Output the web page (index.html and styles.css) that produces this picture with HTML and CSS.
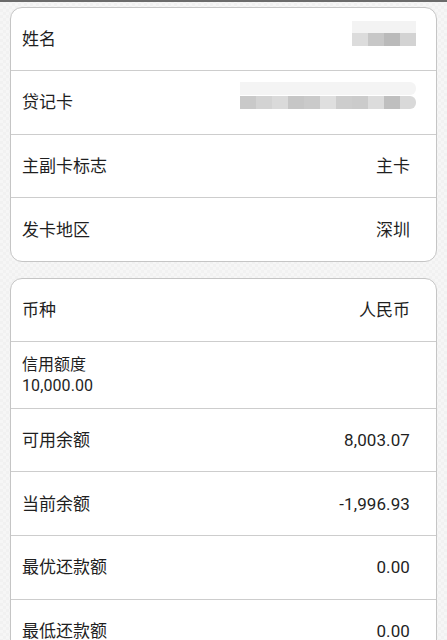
FILE: index.html
```html
<!DOCTYPE html>
<html lang="zh-CN">
<head>
<meta charset="utf-8">
<title>信用卡信息</title>
<link rel="stylesheet" href="styles.css">
</head>
<body>
<div class="topbar"></div>
<main class="page">
  <section class="card card-info">
    <div class="row">
      <span class="label">姓名</span>
      <span class="mask mask-name" aria-label="已隐藏"></span>
    </div>
    <div class="row">
      <span class="label">贷记卡</span>
      <span class="mask mask-card" aria-label="已隐藏"></span>
    </div>
    <div class="row">
      <span class="label">主副卡标志</span>
      <span class="value">主卡</span>
    </div>
    <div class="row">
      <span class="label">发卡地区</span>
      <span class="value">深圳</span>
    </div>
  </section>

  <section class="card card-amount">
    <div class="row row-first">
      <span class="label">币种</span>
      <span class="value">人民币</span>
    </div>
    <div class="row row-stack">
      <span class="label small">信用额度</span>
      <span class="small num">10,000.00</span>
    </div>
    <div class="row">
      <span class="label">可用余额</span>
      <span class="value num">8,003.07</span>
    </div>
    <div class="row">
      <span class="label">当前余额</span>
      <span class="value num">-1,996.93</span>
    </div>
    <div class="row">
      <span class="label">最优还款额</span>
      <span class="value num">0.00</span>
    </div>
    <div class="row">
      <span class="label">最低还款额</span>
      <span class="value num">0.00</span>
    </div>
  </section>
</main>
</body>
</html>
```

FILE: styles.css
```css
* { box-sizing: border-box; }

html, body {
  margin: 0;
  padding: 0;
}

body {
  background-color: #f3f3f3;
  background-image: repeating-conic-gradient(#f1f1f1 0 25%, #f6f6f6 0 50%);
  background-size: 6px 6px;
  font-family: Roboto, "Noto Sans CJK SC", sans-serif;
  color: #1f1f1f;
  overflow: hidden;
  height: 640px;
}

.topbar {
  height: 2px;
  background: #6b6b6b;
}

.page {
  display: flex;
  flex-direction: column;
  gap: 16px;
  padding: 5px 10px 0;
}

.card {
  background: #fff;
  border: 1px solid #c5c5c5;
  border-radius: 12px;
  display: flex;
  flex-direction: column;
  flex-shrink: 0;
}

.row {
  height: 63.3px;
  flex-shrink: 0;
  display: flex;
  align-items: center;
  justify-content: space-between;
  padding: 0 26px 0 11px;
  border-bottom: 1px solid #cdcdcd;
}

.card-amount .row { height: 63.6px; }
.card-amount .row-first { height: 62.6px; }

.row:last-child { border-bottom: none; }

.card-amount .row-stack {
  height: 67px;
  flex-direction: column;
  align-items: flex-start;
  justify-content: center;
  gap: 0;
}

.label, .value {
  font-size: 17px;
  line-height: 22px;
}

.small {
  font-size: 16px;
  line-height: 21px;
}

.num { letter-spacing: 0.1px; }

.mask {
  display: block;
  height: 13px;
  margin-right: -6px;
}

.mask-name {
  width: 64px;
  background: linear-gradient(to right,
    #dcdcdc 0 16px, #c7c7c7 16px 32px, #bababa 32px 48px, #d3d3d3 48px 64px);
  box-shadow: 0 -12px 0 #f3f3f3;
}

.mask-card {
  width: 176px;
  border-radius: 0 6px 6px 0;
  background: linear-gradient(to right,
    #c9c9c9 0 16px, #d3d3d3 16px 32px, #dadada 32px 48px, #c6c6c6 48px 64px,
    #cacaca 64px 80px, #dfdfdf 80px 96px, #cdcdcd 96px 112px, #cbcbcb 112px 128px,
    #dcdcdc 128px 144px, #bfbfbf 144px 160px, #d9d9d9 160px 176px);
  box-shadow: 0 -14px 0 #f4f4f4;
}
```
